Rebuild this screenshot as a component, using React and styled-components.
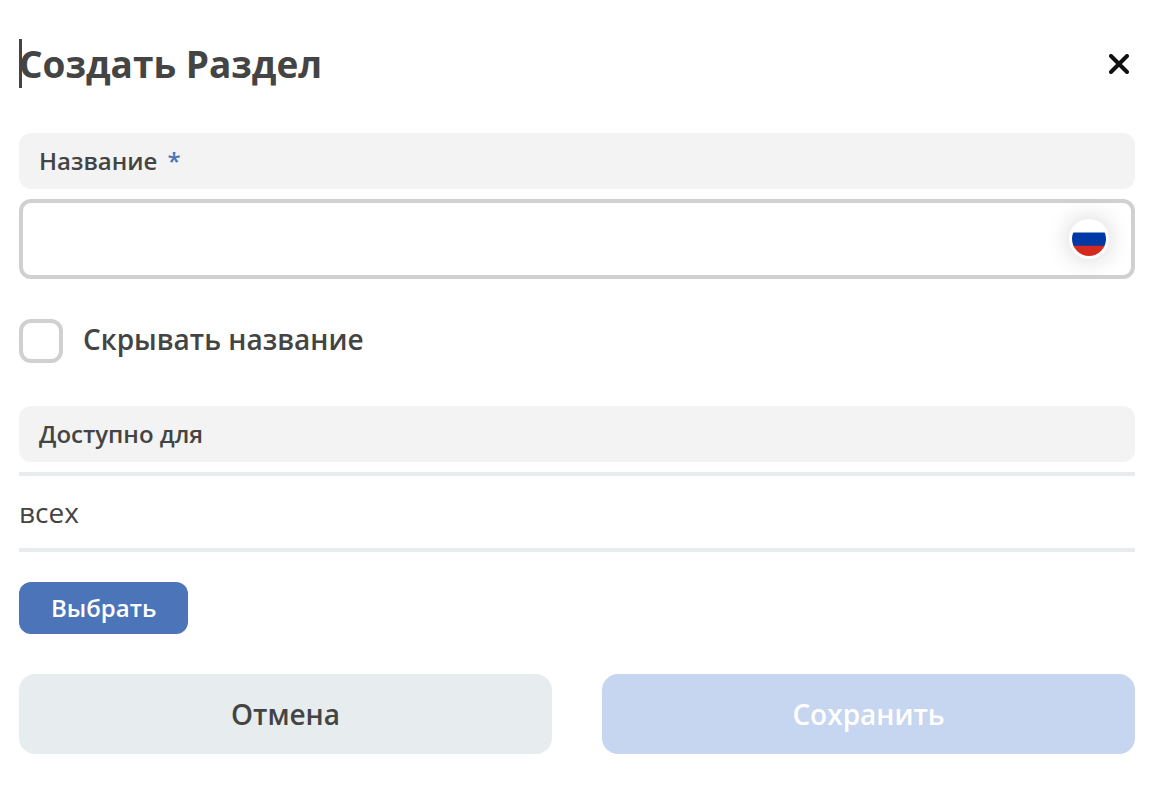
import React, { useState } from "react";
import styled, { createGlobalStyle } from "styled-components";

const GlobalStyle = createGlobalStyle`
  * { box-sizing: border-box; }
  body {
    margin: 0;
    background: #fff;
    color: #444;
    font-family: "Open Sans", "Noto Sans", sans-serif;
  }
  button, input { font: inherit; }
`;

const Form = styled.form`
  display: flex;
  flex-direction: column;
  padding: 39px 17px 31px 19px;
`;

const Header = styled.header`
  display: flex;
  align-items: center;
  justify-content: space-between;
  margin-bottom: 45px;
`;

const Title = styled.h1`
  margin: 0;
  font-size: 37px;
  line-height: 49px;
  font-weight: 700;
  box-shadow: inset 3px 0 #444;
`;

const CloseButton = styled.button`
  display: flex;
  padding: 6px;
  border: 0;
  background: none;
  color: #111;
  cursor: pointer;
`;

const FieldLabel = styled.label`
  display: flex;
  gap: 10px;
  margin-bottom: 10px;
  padding: 12px 20px;
  border-radius: 12px;
  background: #f3f3f3;
  font-size: 24px;
  line-height: 32px;
  font-weight: 600;
`;

const Required = styled.span`
  color: #4b74b9;
`;

const InputBox = styled.div`
  display: flex;
  align-items: center;
  height: 80px;
  margin-bottom: 40px;
  padding: 0 22px 0 16px;
  border: 4px solid #d0d0d0;
  border-radius: 12px;
`;

const TextInput = styled.input`
  flex: 1;
  min-width: 0;
  height: 72px;
  padding: 0;
  border: 0;
  outline: 0;
  background: none;
  font-size: 28px;
`;

const LanguageButton = styled.button`
  display: flex;
  padding: 3px;
  border: 0;
  border-radius: 50%;
  background: #fff;
  box-shadow: 0 0 24px rgba(0, 0, 0, 0.18);
  cursor: pointer;
`;

const CheckRow = styled.label`
  display: flex;
  gap: 20px;
  margin-bottom: 43px;
  font-size: 28px;
  line-height: 40px;
  font-weight: 600;
`;

const Checkbox = styled.input`
  appearance: none;
  width: 44px;
  height: 44px;
  margin: 0;
  border: 4px solid #d0d0d0;
  border-radius: 12px;
  background: ${(p) => (p.checked ? "#4b74b9" : "#fff")};
`;

const Value = styled.output`
  margin-bottom: 30px;
  padding: 16px 0;
  border: solid #e7ecee;
  border-width: 4px 0;
  font-size: 28px;
  line-height: 40px;
`;

const SelectButton = styled.button`
  align-self: flex-start;
  margin-bottom: 40px;
  padding: 10px 32px;
  border: 0;
  border-radius: 12px;
  background: #4b74b9;
  color: #fff;
  font-size: 24px;
  line-height: 32px;
  font-weight: 600;
  cursor: pointer;
`;

const Footer = styled.footer`
  display: grid;
  grid-template-columns: 1fr 1fr;
  gap: 50px;
`;

const ActionButton = styled.button`
  padding: 20px;
  border: 0;
  border-radius: 16px;
  background: ${(p) => (p.$primary ? "#c6d5f0" : "#e7edef")};
  color: ${(p) => (p.$primary ? "#fff" : "#444")};
  font-size: 28px;
  line-height: 40px;
  font-weight: 600;
`;

const RussianFlag = () => (
  <svg width="34" height="34" viewBox="0 0 34 34" aria-hidden="true">
    <clipPath id="flag-circle">
      <circle cx="17" cy="17" r="17" />
    </clipPath>
    <g clipPath="url(#flag-circle)">
      <path fill="#fff" d="M0 0h34v11H0z" />
      <path fill="#0039a6" d="M0 10.4h34v13.6H0z" />
      <path fill="#d52b1e" d="M0 23.7h34v10.3H0z" />
    </g>
  </svg>
);

export default function App() {
  const [name, setName] = useState("");
  const [hidden, setHidden] = useState(false);
  return (
    <>
      <GlobalStyle />
      <Form onSubmit={(e) => e.preventDefault()}>
        <Header>
          <Title>Создать Раздел</Title>
          <CloseButton type="button" aria-label="Закрыть">
            <svg width="20" height="20" viewBox="0 0 20 20" aria-hidden="true">
              <path d="M2 2l16 16M18 2L2 18" fill="none" stroke="currentColor" strokeWidth="4" strokeLinecap="round" />
            </svg>
          </CloseButton>
        </Header>
        <FieldLabel htmlFor="name">
          Название <Required>*</Required>
        </FieldLabel>
        <InputBox>
          <TextInput id="name" required value={name} onChange={(e) => setName(e.target.value)} />
          <LanguageButton type="button" aria-label="Русский">
            <RussianFlag />
          </LanguageButton>
        </InputBox>
        <CheckRow>
          <Checkbox type="checkbox" checked={hidden} onChange={(e) => setHidden(e.target.checked)} />
          Скрывать название
        </CheckRow>
        <FieldLabel htmlFor="audience">Доступно для</FieldLabel>
        <Value id="audience">всех</Value>
        <SelectButton type="button">Выбрать</SelectButton>
        <Footer>
          <ActionButton type="button">Отмена</ActionButton>
          <ActionButton type="submit" $primary disabled={!name}>
            Сохранить
          </ActionButton>
        </Footer>
      </Form>
    </>
  );
}
